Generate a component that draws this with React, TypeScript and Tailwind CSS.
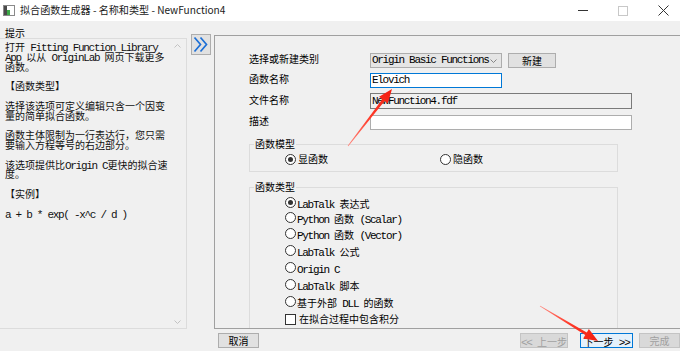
import React from "react";

const A = "font-['Liberation_Mono',monospace] text-[11px] tracking-[-1.3px] whitespace-pre";
const C = "font-['Noto_Sans_CJK_SC',sans-serif] text-[10px] whitespace-pre";

function Mix({ t }: { t: string }) {
  const parts = t.split(/([\x00-\x7f]+)/).filter((p) => p.length > 0);
  return (
    <>
      {parts.map((p, i) =>
        /^[\x00-\x7f]+$/.test(p) ? (
          <span key={i} className={A}>
            {p}
          </span>
        ) : (
          <span key={i} className={C}>
            {p}
          </span>
        )
      )}
    </>
  );
}

const leftLines = [
  "打开 Fitting Function Library",
  "App 以从 OriginLab 网页下载更多",
  "函数。",
  "",
  "【函数类型】",
  "",
  "选择该选项可定义编辑只含一个因变",
  "量的简单拟合函数。",
  "",
  "函数主体限制为一行表达行，您只需",
  "要输入方程等号的右边部分。",
  "",
  "该选项提供比Origin C更快的拟合速",
  "度。",
  "",
  "【实例】",
  "",
  "a + b * exp( -x^c / d )",
];

function arrowPath(x1: number, y1: number, x2: number, y2: number) {
  const dx = x2 - x1;
  const dy = y2 - y1;
  const len = Math.hypot(dx, dy);
  const ux = dx / len;
  const uy = dy / len;
  const px = -uy;
  const py = ux;
  const hl = 14;
  const hw = 5.5;
  const tw = 0.4;
  const sw = 1.5;
  const bx = x2 - ux * hl;
  const by = y2 - uy * hl;
  const pts = [
    [x1 + px * tw, y1 + py * tw],
    [bx + px * sw, by + py * sw],
    [bx + px * hw, by + py * hw],
    [x2, y2],
    [bx - px * hw, by - py * hw],
    [bx - px * sw, by - py * sw],
    [x1 - px * tw, y1 - py * tw],
  ];
  return "M" + pts.map((p) => p[0].toFixed(2) + " " + p[1].toFixed(2)).join(" L") + " Z";
}

function Radio({ on }: { on?: boolean }) {
  return (
    <div className="w-[11px] h-[11px] rounded-full border border-[#333333] bg-white flex items-center justify-center shrink-0">
      {on && <div className="w-[5px] h-[5px] rounded-full bg-[#333333]" />}
    </div>
  );
}

export default function App() {
  return (
    <div className="w-[680px] h-[351px] bg-[#f0f0f0] relative overflow-hidden text-black">
      {/* Title bar */}
      <div className="h-[21px] bg-white flex items-center">
        <svg width="12" height="11" viewBox="0 0 12 11" className="ml-[3px]">
          <rect x="0.5" y="0.5" width="11" height="10" fill="#ffffff" stroke="#8a8a8a" />
          <rect x="1" y="1" width="3" height="9" fill="#4a4a4a" />
          <rect x="4" y="5" width="3" height="5" fill="#3aa845" />
        </svg>
        <span className="ml-[5px] text-[10.1px] leading-none font-['Noto_Sans_CJK_SC',sans-serif] text-[#1a1a1a]">
          拟合函数生成器 - 名称和类型 - NewFunction4
        </span>
        <div className="ml-auto mr-[-3px] flex h-full">
          <div className="w-[40px] h-full flex items-center justify-center">
            <div className="w-[10px] h-[1px] bg-[#333333]" />
          </div>
          <div className="w-[40px] h-full flex items-center justify-center">
            <div className="w-[10px] h-[10px] border border-[#c8c8c8]" />
          </div>
          <div className="w-[40px] h-full flex items-center justify-center">
            <svg width="11" height="11" viewBox="0 0 11 11">
              <path d="M0.5 0.5 L10.5 10.5 M10.5 0.5 L0.5 10.5" stroke="#333333" strokeWidth="1" />
            </svg>
          </div>
        </div>
      </div>

      {/* Main area */}
      <div className="flex h-[308px]">
        {/* Left help column */}
        <div className="w-[187px] flex flex-col pt-[6px]">
          <div className="h-[11px] leading-[11px] pl-[5px] text-[10px] font-['Noto_Sans_CJK_SC',sans-serif]">提示</div>
          <div className="flex-1 border-t border-r border-b border-[#dcdcdc] flex">
            <div className="flex-1 pl-[5px] pt-[2px] text-[#111111]">
              {leftLines.map((l, i) => (
                <div key={i} className="h-[9.8px] leading-[9.8px] whitespace-nowrap">
                  <Mix t={l} />
                </div>
              ))}
            </div>
            <div className="w-[17px] flex flex-col items-center justify-between pt-[5px] pb-[4px]">
              <svg width="7" height="4" viewBox="0 0 7 4">
                <path d="M0.5 3.5 L3.5 0.5 L6.5 3.5" fill="none" stroke="#c2c2c2" strokeWidth="1" />
              </svg>
              <svg width="7" height="4" viewBox="0 0 7 4">
                <path d="M0.5 0.5 L3.5 3.5 L6.5 0.5" fill="none" stroke="#c2c2c2" strokeWidth="1" />
              </svg>
            </div>
          </div>
        </div>

        {/* Collapse button */}
        <div className="ml-[4px] mt-[13px] w-[20px] h-[21px] bg-[#e1e1e1] border border-[#adadad] flex items-center justify-center">
          <svg width="16" height="17" viewBox="0 0 16 17">
            <path d="M1.5 1.5 L7.5 8.5 L1.5 15.5" fill="none" stroke="#1c6fd6" strokeWidth="1.7" />
            <path d="M7.5 1.5 L13.5 8.5 L7.5 15.5" fill="none" stroke="#1c6fd6" strokeWidth="1.7" />
          </svg>
        </div>

        {/* Form panel */}
        <div className="ml-[3px] mt-[14px] mr-[-3px] flex-1 h-[294px] border border-[#a0a0a0] overflow-hidden pl-[34px] pt-[17px] flex flex-col">
          {/* Row 1 */}
          <div className="flex items-center h-[15px]">
            <div className={"w-[121px] " + C + " leading-none -mt-[4px]"}>选择或新建类别</div>
            <div className="w-[132px] h-[15px] bg-[#e5e5e5] border border-[#adadad] flex items-center pl-[1px] pr-[4px]">
              <span className={A + " leading-none"}>Origin Basic Functions</span>
              <svg width="7" height="4" viewBox="0 0 7 4" className="ml-auto">
                <path d="M0.5 0.5 L3.5 3.5 L6.5 0.5" fill="none" stroke="#7a7a7a" strokeWidth="0.9" />
              </svg>
            </div>
            <div className="ml-[6px] w-[48px] h-[15px] bg-[#e1e1e1] border border-[#adadad] flex items-center justify-center">
              <span className={C + " leading-none"}>新建</span>
            </div>
          </div>
          {/* Row 2 */}
          <div className="flex items-center h-[15px] mt-[5px]">
            <div className={"w-[121px] " + C + " leading-none -mt-[3px]"}>函数名称</div>
            <div className="w-[132px] h-[15px] bg-white border border-[#0078d7] flex items-center pl-[1px]">
              <span className={A + " leading-none"}>Elovich</span>
            </div>
          </div>
          {/* Row 3 */}
          <div className="flex items-center h-[16px] mt-[5px]">
            <div className={"w-[121px] " + C + " leading-none -mt-[2px]"}>文件名称</div>
            <div className="w-[262px] h-[16px] bg-[#f0f0f0] border border-[#7a7a7a] flex items-center pl-[1px]">
              <span className={A + " leading-none"}>NewFunction4.fdf</span>
            </div>
          </div>
          {/* Row 4 */}
          <div className="flex items-center h-[15px] mt-[6px]">
            <div className={"w-[121px] " + C + " leading-none -mt-[3px]"}>描述</div>
            <div className="w-[262px] h-[15px] bg-white border border-[#adadad]" />
          </div>

          {/* Group: 函数模型 */}
          <div className="relative mt-[14px] w-[369px] h-[28px] shrink-0 border border-[#dcdcdc] pl-[35px] flex items-center">
            <div className={"absolute left-[4px] top-[-7px] px-[1px] bg-[#f0f0f0] leading-[12px] " + C}>函数模型</div>
            <div className="flex items-center w-[155px] mt-[2px]">
              <Radio on />
              <span className={"ml-[2px] leading-none " + C}>显函数</span>
            </div>
            <div className="flex items-center mt-[2px]">
              <Radio />
              <span className={"ml-[2px] leading-none " + C}>隐函数</span>
            </div>
          </div>

          {/* Group: 函数类型 */}
          <div className="relative mt-[15px] w-[369px] h-[170px] shrink-0 border border-[#dcdcdc] pl-[35px] flex flex-col">
            <div className={"absolute left-[4px] top-[-7px] px-[1px] bg-[#f0f0f0] leading-[12px] " + C}>函数类型</div>
            <div className="flex items-center h-[12px] mt-[8px]">
              <Radio on />
              <span className="ml-[1px] leading-none"><Mix t="LabTalk 表达式" /></span>
            </div>
            <div className="flex items-center h-[12px] mt-[3.5px]">
              <Radio />
              <span className="ml-[1px] leading-none"><Mix t="Python 函数 (Scalar)" /></span>
            </div>
            <div className="flex items-center h-[12px] mt-[3.5px]">
              <Radio />
              <span className="ml-[1px] leading-none"><Mix t="Python 函数 (Vector)" /></span>
            </div>
            <div className="flex items-center h-[12px] mt-[5.5px]">
              <Radio />
              <span className="ml-[1px] leading-none"><Mix t="LabTalk 公式" /></span>
            </div>
            <div className="flex items-center h-[12px] mt-[5px]">
              <Radio />
              <span className="ml-[1px] leading-none"><Mix t="Origin C" /></span>
            </div>
            <div className="flex items-center h-[12px] mt-[5.3px]">
              <Radio />
              <span className="ml-[1px] leading-none"><Mix t="LabTalk 脚本" /></span>
            </div>
            <div className="flex items-center h-[12px] mt-[4.7px]">
              <Radio />
              <span className="ml-[1px] leading-none"><Mix t="基于外部 DLL 的函数" /></span>
            </div>
            <div className="flex items-center h-[12px] mt-[5.6px]">
              <div className="w-[11px] h-[11px] border border-[#333333] bg-white shrink-0" />
              <span className={"ml-[3px] leading-none " + C}>在拟合过程中包含积分</span>
            </div>
          </div>
        </div>
      </div>

      {/* Bottom buttons */}
      <div className="flex items-start h-[22px] pt-[4px]">
        <div className="ml-[218px] w-[41px] h-[15px] bg-[#e1e1e1] border border-[#adadad] flex items-center justify-center">
          <span className={C + " leading-none"}>取消</span>
        </div>
        <div className="ml-auto w-[48px] h-[15px] bg-[#d9d9d9] border border-[#c4c4c4] flex items-center justify-center text-[#a0a0a0]">
          <span className="leading-none"><Mix t="<< 上一步" /></span>
        </div>
        <div className="ml-[12px] w-[53px] h-[15px] bg-[#e5f1fb] border border-[#0078d7] flex items-center justify-center">
          <span className="leading-none"><Mix t="下一步 >>" /></span>
        </div>
        <div className="ml-[6px] w-[41px] h-[15px] bg-[#d9d9d9] border border-[#c4c4c4] flex items-center justify-center text-[#a0a0a0]">
          <span className={C + " leading-none"}>完成</span>
        </div>
      </div>

      {/* Annotation arrows */}
      <svg className="absolute inset-0 pointer-events-none" width="680" height="351" viewBox="0 0 680 351">
        <defs>
          <linearGradient id="g1" x1="348" y1="146" x2="392" y2="89" gradientUnits="userSpaceOnUse">
            <stop offset="0" stopColor="#ff8a80" />
            <stop offset="0.5" stopColor="#ff3b2a" />
            <stop offset="1" stopColor="#f21d10" />
          </linearGradient>
          <linearGradient id="g2" x1="540" y1="306" x2="598" y2="341" gradientUnits="userSpaceOnUse">
            <stop offset="0" stopColor="#ff8a80" />
            <stop offset="0.5" stopColor="#ff3b2a" />
            <stop offset="1" stopColor="#f21d10" />
          </linearGradient>
        </defs>
        <path d={arrowPath(348, 146, 392, 89)} fill="url(#g1)" />
        <path d={arrowPath(540, 306, 598, 341)} fill="url(#g2)" />
      </svg>
    </div>
  );
}
